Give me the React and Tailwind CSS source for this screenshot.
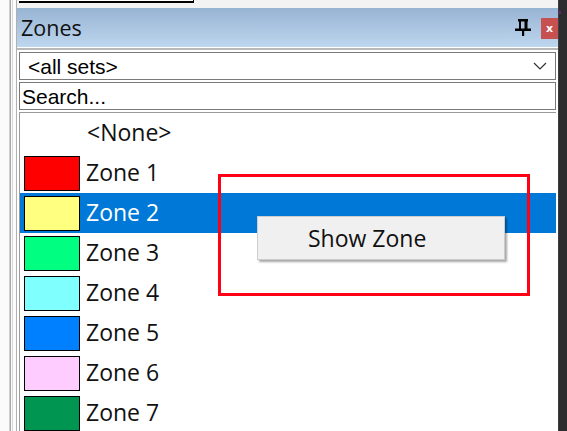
import React from "react";

const zones = [
  { name: "Zone 1", color: "bg-[#ff0000]" },
  { name: "Zone 2", color: "bg-[#ffff80]", selected: true },
  { name: "Zone 3", color: "bg-[#00ff80]" },
  { name: "Zone 4", color: "bg-[#80ffff]" },
  { name: "Zone 5", color: "bg-[#0080ff]" },
  { name: "Zone 6", color: "bg-[#ffccff]" },
  { name: "Zone 7", color: "bg-[#009651]" },
];

function Pin() {
  return (
    <svg width="16" height="17" viewBox="0 0 16 17" className="block">
      <rect x="3" y="0" width="10" height="2.5" fill="#000" />
      <rect x="4" y="2" width="2" height="8" fill="#000" />
      <rect x="9.5" y="2" width="3" height="8" fill="#000" />
      <rect x="0" y="9.5" width="16" height="2.5" fill="#000" />
      <rect x="7" y="12" width="2.2" height="5" fill="#000" />
    </svg>
  );
}

export default function App() {
  return (
    <div className="relative flex h-[431px] w-[567px] overflow-hidden bg-white">
      {/* left strip */}
      <div className="relative h-full w-[17px] shrink-0 bg-[#fbfbfb]">
        <div className="absolute left-[9px] top-0 h-full w-[1px] bg-[#d0d0d0]" />
        <div className="absolute left-[10px] top-0 h-full w-[1px] bg-[#a8a8a8]" />
        <div className="absolute left-[12px] top-0 h-full w-[1px] bg-[#d8d8d8]" />
        <div className="absolute left-[16px] top-0 h-full w-[1px] bg-[#b0b0b0]" />
      </div>

      {/* main panel */}
      <div className="flex min-w-0 flex-1 flex-col">
        {/* top strip */}
        <div className="flex h-[8px] shrink-0 bg-[#f3f3f3]">
          <div className="ml-[2px] h-[3px] w-[175px] border-b-2 border-r border-black bg-white" />
        </div>

        {/* title bar */}
        <div className="flex h-[39px] shrink-0 items-center bg-gradient-to-b from-[#98b4d4] to-[#bed6ee] pl-[4px]">
          <span className="flex-1 text-[21.5px] leading-none text-[#111] [font-family:'Open_Sans','Noto_Sans',sans-serif]">
            Zones
          </span>
          <div className="mr-[10px] mt-[-1px]">
            <Pin />
          </div>
          <div className="mt-[10px] flex h-[21px] w-[17px] items-center justify-center self-start bg-[#c75050] text-[11px] font-bold leading-none text-white [font-family:'DejaVu_Sans',sans-serif]">
            x
          </div>
        </div>

        {/* separator */}
        <div className="h-[1px] shrink-0 bg-white" />
        <div className="h-[2px] shrink-0 bg-[#b8b8b8]" />
        <div className="h-[2px] shrink-0 bg-white" />

        {/* combo */}
        <div className="mx-[2px] flex h-[28px] shrink-0 items-center border border-[#7a7a7a] bg-white pl-[8px] pr-[8px] [font-family:'Liberation_Sans',Arial,sans-serif]">
          <span className="flex-1 text-[21px] leading-none text-black">&lt;all sets&gt;</span>
          <svg width="14" height="8" viewBox="0 0 14 8">
            <polyline points="1,1 7,7 13,1" fill="none" stroke="#333" strokeWidth="1.2" />
          </svg>
        </div>
        <div className="h-[2px] shrink-0 bg-white" />

        {/* search */}
        <div className="mx-[2px] flex h-[28px] shrink-0 items-center border border-[#7a7a7a] bg-white pl-[2px] [font-family:'Liberation_Sans',Arial,sans-serif]">
          <span className="text-[21px] leading-none text-black">Search...</span>
        </div>
        <div className="h-[2px] shrink-0 bg-white" />

        {/* list */}
        <div className="mx-[2px] flex flex-1 flex-col border-l border-t border-[#9a9a9a] bg-white [font-family:'Open_Sans','Noto_Sans',sans-serif]">
          <div className="flex h-[40px] shrink-0 items-center pb-[2px] pl-[67px] text-[23px] leading-none text-[#111]">
            &lt;None&gt;
          </div>
          {zones.map((z) => (
            <div
              key={z.name}
              className={
                z.selected
                  ? "flex h-[40px] shrink-0 items-center bg-[#0078d7] text-white"
                  : "flex h-[40px] shrink-0 items-center text-[#111]"
              }
            >
              <div className={`ml-[4px] h-[35px] w-[56px] shrink-0 border border-black ${z.color}`} />
              <span className="mb-[2px] ml-[6px] text-[23px] leading-none">{z.name}</span>
            </div>
          ))}
        </div>
      </div>

      {/* right dark strip */}
      <div className="relative h-full w-[9px] shrink-0 bg-[#2d2d30]">
        <div className="absolute left-0 top-0 h-full w-[1px] bg-[#3e3e42]" />
        <div className="absolute left-[1px] top-[11px] h-[3px] w-[2px] bg-[#68217a]" />
      </div>

      {/* context menu */}
      <div className="absolute left-[257px] top-[216px] flex h-[44px] w-[248px] items-center border border-[#cccccc] bg-[#f0f0f0] pl-[50px] shadow-[2px_2px_2px_rgba(0,0,0,0.35)] [font-family:'Open_Sans','Noto_Sans',sans-serif]">
        <span className="text-[23px] leading-none text-[#111]">Show Zone</span>
      </div>

      {/* red annotation */}
      <div className="pointer-events-none absolute left-[218px] top-[174px] h-[122px] w-[312px] border-[3px] border-[#ff0014]" />
    </div>
  );
}
